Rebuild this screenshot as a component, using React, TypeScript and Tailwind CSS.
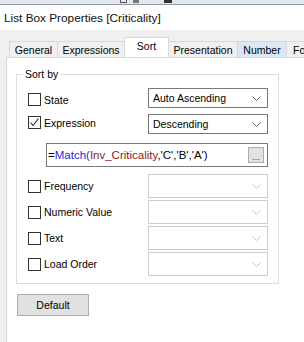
const Chevron = ({ disabled }: { disabled?: boolean }) => (
  <svg width="9" height="5" viewBox="0 0 9 5" className="shrink-0">
    <path d="M0.5 0.5 L4.5 4.5 L8.5 0.5" fill="none" stroke={disabled ? "#c4c4c4" : "#606060"} strokeWidth="1" />
  </svg>
);

const Check = ({ checked }: { checked?: boolean }) => (
  <div className="w-[13px] h-[13px] shrink-0 border border-[#333333] bg-white flex items-center justify-center">
    {checked && (
      <svg width="11" height="11" viewBox="0 0 11 11">
        <path d="M1.5 5.5 L4 8.5 L9.5 1.5" fill="none" stroke="#222222" strokeWidth="1.1" />
      </svg>
    )}
  </div>
);

const Select = ({ value, disabled, tall }: { value?: string; disabled?: boolean; tall?: boolean }) => (
  <div
    className={`w-[120px] ${tall ? "h-[24px]" : "h-[20px]"} bg-white border ${
      disabled ? "border-[#cccccc]" : "border-[#7a7a7a]"
    } flex items-center justify-between pl-[4px] pr-[6px]`}
  >
    <span className="text-[10.5px] leading-[12px] text-black">{value}</span>
    <Chevron disabled={disabled} />
  </div>
);

const tabs = [
  { label: "General", w: "w-[49px]" },
  { label: "Expressions", w: "w-[68px]" },
  { label: "Sort", w: "w-[45px]", active: true },
  { label: "Presentation", w: "w-[70px]" },
  { label: "Number", w: "w-[50px]", hover: true },
  { label: "Fo", w: "w-[44px]", cut: true },
];

export default function App() {
  return (
    <div
      className="w-[304px] h-[342px] overflow-hidden bg-[#f0f0f0] text-black"
      style={{ fontFamily: '"Liberation Sans", Arial, sans-serif' }}
    >
      {/* strip of the window behind */}
      <div className="h-[5px] bg-[#e4e8ed] border-b border-[#8d99a6] relative">
        <div className="absolute left-[120px] top-0 w-[7px] h-[3px] border border-t-0 border-[#555]" />
        <div className="absolute left-[133px] top-0 w-[6px] h-[3px] bg-[#777]" />
        <div className="absolute left-[164px] top-0 w-[8px] h-[3px] bg-[#333]" />
      </div>

      {/* title */}
      <div className="h-[25px] bg-white flex items-center pl-[4px]">
        <span className="text-[11.8px] leading-[14px] text-[#111]">List Box Properties [Criticality]</span>
      </div>

      {/* tabs */}
      <div className="h-[27px] flex items-end pl-[9px] overflow-hidden">
        {tabs.map((t, i) =>
          t.active ? (
            <div
              key={t.label}
              className={`${t.w} shrink-0 h-[21px] -mb-px -ml-px relative z-10 bg-white border border-b-0 border-[#d9d9d9] flex justify-center pt-[2px]`}
            >
              <span className="text-[10.5px] leading-[12px]">{t.label}</span>
            </div>
          ) : (
            <div
              key={t.label}
              className={`${t.w} h-[16px] shrink-0 ${i > 0 ? "-ml-px" : ""} border border-b-0 ${
                t.hover ? "bg-[#d9e8f6] border-[#c2d7ec]" : "bg-[#f0f0f0] border-[#d9d9d9]"
              } flex items-center ${t.cut ? "justify-start pl-[6px]" : "justify-center"}`}
            >
              <span className="text-[10.5px] leading-[12px] whitespace-nowrap">{t.label}</span>
            </div>
          )
        )}
      </div>

      {/* panel */}
      <div className="ml-[6px] w-[310px] h-[300px] bg-white border border-[#d9d9d9]">
        <fieldset className="ml-[9px] mt-[10px] w-[263px] border border-[#dcdcdc] p-0 m-0">
          <legend className="ml-[6px] px-[2px] text-[10.5px] leading-[12px]">Sort by</legend>
          <div className="pl-[11px] pt-[8px] pb-[7px]">
            <div className="flex items-start">
              <div className="w-[120px] flex items-center gap-[3px] mt-[5px]">
                <Check />
                <span className="text-[10.5px] leading-[12px]">State</span>
              </div>
              <Select value="Auto Ascending" />
            </div>
            <div className="flex items-start mt-[6px]">
              <div className="w-[120px] flex items-center gap-[3px] mt-[2px]">
                <Check checked />
                <span className="text-[10.5px] leading-[12px]">Expression</span>
              </div>
              <Select value="Descending" />
            </div>
            <div className="ml-[18px] mt-[9px] w-[222px] h-[24px] border border-[#7a7a7a] flex items-center justify-between pl-[1px] pr-[3px]">
              <span className="text-[11.5px] leading-[14px] whitespace-nowrap">
                =<span className="text-[#2a2ad0]">Match(</span>
                <span className="text-[#8b1a1a]">Inv_Criticality</span>
                ,'C','B','A')
              </span>
              <div className="w-[16px] h-[16px] bg-[#e1e1e1] border border-[#adadad] flex items-end justify-center">
                <span className="text-[9px] leading-[10px] text-[#333]">...</span>
              </div>
            </div>
            {["Frequency", "Numeric Value", "Text", "Load Order"].map((l, i) => (
              <div key={l} className={`flex items-center ${i === 0 ? "mt-[7px]" : "mt-[2px]"}`}>
                <div className="w-[120px] flex items-center gap-[3px]">
                  <Check />
                  <span className="text-[10.5px] leading-[12px] whitespace-nowrap">{l}</span>
                </div>
                <Select disabled tall />
              </div>
            ))}
          </div>
        </fieldset>

        <button className="ml-[10px] mt-[10px] w-[72px] h-[22px] bg-[#e1e1e1] border border-[#adadad] flex items-center justify-center">
          <span className="text-[10.5px] leading-[12px]">Default</span>
        </button>
      </div>
    </div>
  );
}
